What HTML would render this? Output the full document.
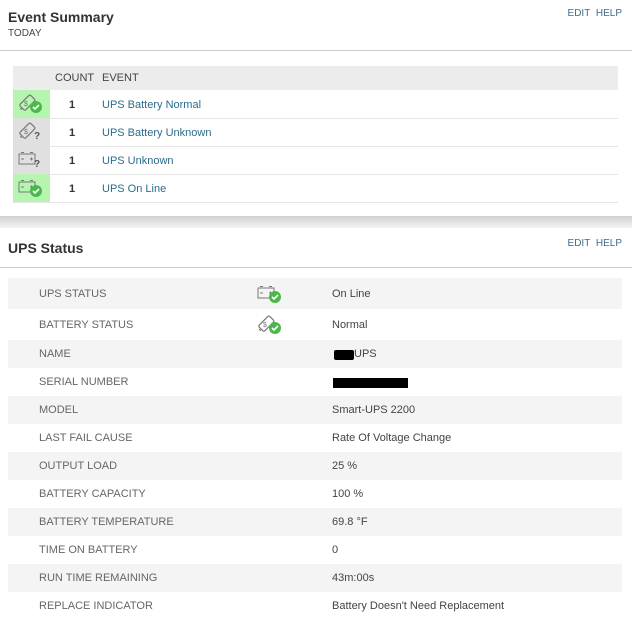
<!DOCTYPE html>
<html><head><meta charset="utf-8"><style>
*{margin:0;padding:0;box-sizing:border-box}
body{width:632px;height:624px;background:#fff;font-family:"Liberation Sans",sans-serif;color:#333;position:relative;overflow:hidden}
.abs{position:absolute}
.title{font-weight:bold;font-size:14px;color:#333}
.links{font-size:10px;color:#3b6e8c;right:10px;left:auto}
a{color:#2b6c8c;text-decoration:none}
</style></head><body>
<div class="abs title" style="left:8px;top:9px">Event Summary</div>
<div class="abs" style="left:8px;top:28px;font-size:10px;color:#444">TODAY</div>
<div class="abs links" style="top:8px">EDIT&nbsp; HELP</div>
<div class="abs" style="left:0;top:50px;width:632px;height:1px;background:#ccc"></div>

<div class="abs" style="left:13px;top:66px;width:605px;height:24px;background:#ececec"></div>
<div class="abs" style="left:55px;top:72px;font-size:11px;color:#444">COUNT</div>
<div class="abs" style="left:102px;top:72px;font-size:11px;color:#444">EVENT</div>

<svg width="0" height="0" style="position:absolute">
<defs>
<g id="tag"><g transform="rotate(-45 10 10)" fill="none" stroke="#777" stroke-width="1.2"><rect x="3" y="6" width="15" height="8" rx="1.5"/><line x1="1.5" y1="9" x2="1.5" y2="11"/></g><text x="7" y="13" font-size="7" fill="#777" font-family="Liberation Sans">$</text></g>
<g id="box" fill="none" stroke="#777" stroke-width="1"><rect x="2" y="5" width="16" height="10"/><line x1="4" y1="3.5" x2="7" y2="3.5"/><line x1="13" y1="3.5" x2="16" y2="3.5"/><line x1="4" y1="10" x2="7" y2="10"/><line x1="13" y1="10" x2="16" y2="10"/><line x1="14.5" y1="8.5" x2="14.5" y2="11.5"/></g>
<g id="chk"><circle cx="19" cy="14" r="6" fill="#4cb84c"/><path d="M16 14l2 2 4-4" stroke="#fff" stroke-width="1.6" fill="none"/></g>
<g id="q"><text x="17" y="18" font-size="10" font-weight="bold" fill="#555" font-family="Liberation Sans">?</text></g>
</defs></svg>

<div class="abs" style="left:13px;top:90px;width:37px;height:28px;background:#b6f5b0"></div>
<div class="abs" style="left:13px;top:118px;width:37px;height:28px;background:#e0e0e0"></div>
<div class="abs" style="left:13px;top:146px;width:37px;height:28px;background:#e0e0e0"></div>
<div class="abs" style="left:13px;top:174px;width:37px;height:28px;background:#b6f5b0"></div>
<svg class="abs" style="left:17px;top:93px" width="28" height="22"><use href="#tag"/><use href="#chk"/></svg>
<svg class="abs" style="left:17px;top:121px" width="28" height="22"><use href="#tag"/><use href="#q"/></svg>
<svg class="abs" style="left:17px;top:149px" width="28" height="22"><use href="#box"/><use href="#q"/></svg>
<svg class="abs" style="left:17px;top:177px" width="28" height="22"><use href="#box"/><use href="#chk"/></svg>
<div class="abs" style="left:50px;top:118px;width:568px;height:1px;background:#e6e6e6"></div>
<div class="abs" style="left:50px;top:146px;width:568px;height:1px;background:#e6e6e6"></div>
<div class="abs" style="left:50px;top:174px;width:568px;height:1px;background:#e6e6e6"></div>
<div class="abs" style="left:13px;top:202px;width:605px;height:1px;background:#e6e6e6"></div>
<div class="abs" style="left:69px;top:99px;font-size:11px;font-weight:bold">1</div>
<div class="abs" style="left:69px;top:127px;font-size:11px;font-weight:bold">1</div>
<div class="abs" style="left:69px;top:155px;font-size:11px;font-weight:bold">1</div>
<div class="abs" style="left:69px;top:183px;font-size:11px;font-weight:bold">1</div>
<div class="abs" style="left:102px;top:99px;font-size:11px"><a>UPS Battery Normal</a></div>
<div class="abs" style="left:102px;top:127px;font-size:11px"><a>UPS Battery Unknown</a></div>
<div class="abs" style="left:102px;top:155px;font-size:11px"><a>UPS Unknown</a></div>
<div class="abs" style="left:102px;top:183px;font-size:11px"><a>UPS On Line</a></div>

<div class="abs" style="left:0;top:216px;width:632px;height:12px;background:linear-gradient(#d0d0d0,#e6e6e6 60%,#f4f4f4)"></div>

<div class="abs title" style="left:8px;top:240px">UPS Status</div>
<div class="abs links" style="top:238px">EDIT&nbsp; HELP</div>
<div class="abs" style="left:0;top:267px;width:632px;height:1px;background:#ccc"></div>

<div id="rows"></div>
<script>
var r=[["UPS STATUS","On Line",278,31],["BATTERY STATUS","Normal",309,31],["NAME","",340,28],["SERIAL NUMBER","",368,28],["MODEL","Smart-UPS 2200",396,28],["LAST FAIL CAUSE","Rate Of Voltage Change",424,28],["OUTPUT LOAD","25 %",452,28],["BATTERY CAPACITY","100 %",480,28],["BATTERY TEMPERATURE","69.8 °F",508,28],["TIME ON BATTERY","0",536,28],["RUN TIME REMAINING","43m:00s",564,28],["REPLACE INDICATOR","Battery Doesn't Need Replacement",592,28]];
var h="";r.forEach(function(x,i){var t=x[2],hh=x[3];h+='<div class="abs" style="left:8px;top:'+t+'px;width:614px;height:'+hh+'px;background:'+(i%2?'#fff':'#f4f4f4')+'"></div>';
var ty=t+(hh/2)-6;h+='<div class="abs" style="left:39px;top:'+ty+'px;font-size:11px;color:#666">'+x[0]+'</div><div class="abs" style="left:332px;top:'+ty+'px;font-size:11px;color:#444">'+x[1]+'</div>';});
document.getElementById("rows").innerHTML=h;
</script>
<svg class="abs" style="left:256px;top:283px" width="28" height="22"><use href="#box"/><use href="#chk"/></svg>
<svg class="abs" style="left:256px;top:314px" width="28" height="22"><use href="#tag"/><use href="#chk"/></svg>
<div class="abs" style="left:334px;top:350px;width:20px;height:10px;background:#000;border-radius:2px"></div>
<div class="abs" style="left:354px;top:348px;font-size:11px;color:#444">UPS</div>
<div class="abs" style="left:333px;top:378px;width:75px;height:10px;background:#000"></div>
</body></html>
